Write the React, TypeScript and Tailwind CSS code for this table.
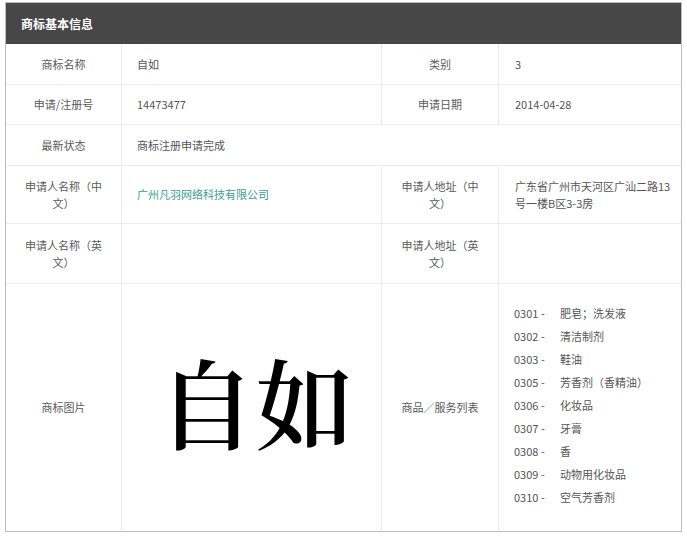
import React from "react";

const goods: [string, string][] = [
  ["0301 -", "肥皂；洗发液"],
  ["0302 -", "清洁制剂"],
  ["0303 -", "鞋油"],
  ["0305 -", "芳香剂（香精油）"],
  ["0306 -", "化妆品"],
  ["0307 -", "牙膏"],
  ["0308 -", "香"],
  ["0309 -", "动物用化妆品"],
  ["0310 -", "空气芳香剂"],
];

function Label({ children, w, last }: { children?: React.ReactNode; w: string; last?: boolean }) {
  return (
    <div
      className={`${w} shrink-0 flex items-center justify-center text-center px-[15px] text-[#5a5a5a] leading-[16.5px] ${
        last ? "" : "border-r border-[#ececec]"
      }`}
    >
      <div>{children}</div>
    </div>
  );
}

function Value({ children, w, last, extra }: { children?: React.ReactNode; w: string; last?: boolean; extra?: string }) {
  return (
    <div
      className={`${w} shrink-0 flex items-center pl-[15px] pr-2 text-[#555] leading-[16.5px] ${
        last ? "" : "border-r border-[#ececec]"
      } ${extra ?? ""}`}
    >
      <div>{children}</div>
    </div>
  );
}

export default function App() {
  return (
    <div
      className="bg-white w-[687px] h-[536px] pt-[2px] pl-[5px]"
      style={{ fontFamily: '"Noto Sans CJK SC", "Noto Sans", sans-serif' }}
    >
      <div className="w-[677px] border border-[#bcbcbc] text-[11px]">
        <div className="h-[41px] bg-[#474747] flex items-center pl-[15px] text-white text-[12px] font-bold">
          商标基本信息
        </div>
        <div className="flex h-[41px] border-b border-[#ececec]">
          <Label w="w-[116px]">商标名称</Label>
          <Value w="w-[260px]">自如</Value>
          <Label w="w-[117px]">类别</Label>
          <Value w="w-[182px]" last extra="pl-[16px]">3</Value>
        </div>
        <div className="flex h-[40px] border-b border-[#ececec]">
          <Label w="w-[116px]">申请/注册号</Label>
          <Value w="w-[260px]">14473477</Value>
          <Label w="w-[117px]">申请日期</Label>
          <Value w="w-[182px]" last extra="pl-[16px]">2014-04-28</Value>
        </div>
        <div className="flex h-[41px] border-b border-[#ececec]">
          <Label w="w-[116px]">最新状态</Label>
          <Value w="w-[559px]" last>商标注册申请完成</Value>
        </div>
        <div className="flex h-[58px] border-b border-[#ececec]">
          <Label w="w-[116px]">申请人名称（中文）</Label>
          <Value w="w-[260px]">
            <span className="text-[#3a9c97]">广州凡羽网络科技有限公司</span>
          </Value>
          <Label w="w-[117px]">申请人地址（中文）</Label>
          <Value w="w-[182px]" last extra="pl-[16px]">
            广东省广州市天河区广汕二路13号一楼B区3-3房
          </Value>
        </div>
        <div className="flex h-[60px] border-b border-[#ececec]">
          <Label w="w-[116px]">申请人名称（英文）</Label>
          <Value w="w-[260px]"></Value>
          <Label w="w-[117px]">申请人地址（英文）</Label>
          <Value w="w-[182px]" last></Value>
        </div>
        <div className="flex h-[247px]">
          <Label w="w-[116px]">商标图片</Label>
          <div className="w-[260px] shrink-0 border-r border-[#ececec] flex items-center justify-center pb-[16px] pl-[8px]">
            <span
              className="text-[98px] leading-none text-black font-semibold"
              style={{ fontFamily: '"Noto Serif CJK SC", "Noto Serif CJK", "AR PL UMing CN", "Noto Sans CJK SC", serif' }}
            >
              自如
            </span>
          </div>
          <Label w="w-[117px]">商品／服务列表</Label>
          <div className="w-[182px] shrink-0 pl-[15px] pt-[18px] text-[#555]">
            {goods.map(([c, n]) => (
              <div key={c} className="flex h-[23px] items-center">
                <span className="w-[46px] shrink-0">{c}</span>
                <span>{n}</span>
              </div>
            ))}
          </div>
        </div>
      </div>
    </div>
  );
}
